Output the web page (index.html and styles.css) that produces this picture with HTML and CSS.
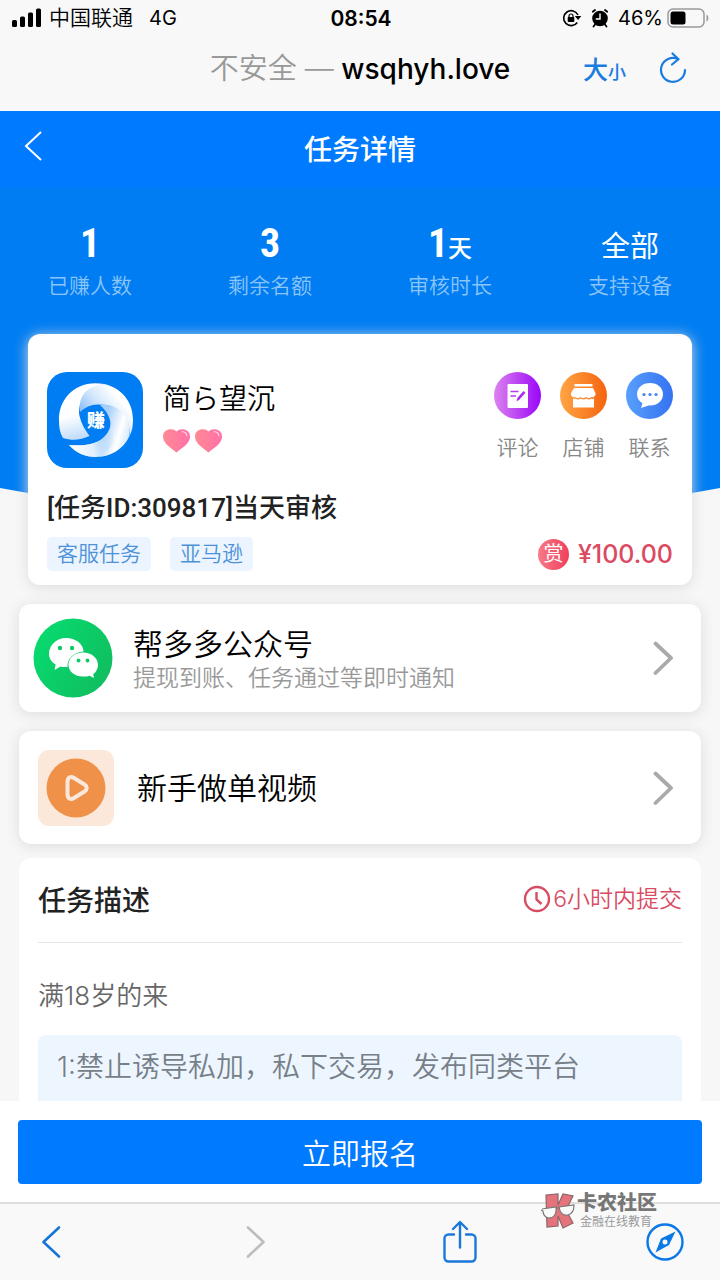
FILE: index.html
```html
<!DOCTYPE html>
<html lang="zh-CN">
<head>
<meta charset="utf-8">
<meta name="viewport" content="width=device-width, initial-scale=1">
<title>任务详情</title>
<link rel="stylesheet" href="styles.css">
</head>
<body>
<div class="screen">
  <div class="statusbar">
    <div class="status-left">
      <svg width="30" height="20" viewBox="0 0 30 20" aria-hidden="true"><rect x="0" y="12" width="5" height="7" rx="1.5"/><rect x="8" y="8.500" width="5" height="10.500" rx="1.500"/><rect x="16" y="4.500" width="5" height="14.500" rx="1.500"/><rect x="24" y="0.500" width="5" height="18.500" rx="1.500"/></svg>
      <span class="carrier">中国联通</span>
      <span>4G</span>
    </div>
    <div class="status-time">08:54</div>
    <div class="status-right">
      <svg width="20" height="20" viewBox="0 0 20 20" aria-hidden="true"><path d="M15.300 14.500A7.500 7.500 0 1 1 16 7" fill="none" stroke="#000" stroke-width="1.600"/><path d="M12.800 8h6.500l-3.200 4z"/><rect x="5.700" y="9" width="6.600" height="5" rx="0.800"/><path d="M7 9.500V8a2 2 0 0 1 4 0v1.500" fill="none" stroke="#000" stroke-width="1.200"/></svg>
      <svg class="alarm" width="18" height="20" viewBox="0 0 18 20" aria-hidden="true"><circle cx="9" cy="10.500" r="7.800"/><path d="M1.800 3.800 4 2M16.200 3.800 14 2M4 16.500l-1.500 2M14 16.500l1.500 2" stroke="#000" stroke-width="1.800" stroke-linecap="round"/><path d="M9 5.500v5.500H4.800" fill="none" stroke="#fff" stroke-width="1.400"/></svg>
      <span>46%</span>
      <svg width="43" height="20" viewBox="0 0 43 20" aria-hidden="true"><rect x="1" y="1" width="36" height="18" rx="5" fill="none" stroke="#999" stroke-width="1.500"/><rect x="3.500" y="3.500" width="15" height="13" rx="2.500"/><path d="M39.500 6.500c2.500 1 2.500 6 0 7z" fill="#999"/></svg>
    </div>
  </div>
  <div class="addressbar">
    <div class="address"><span class="insecure">不安全 —</span> wsqhyh.love</div>
    <div class="address-tools">
      <button class="plain textsize" type="button"><span class="big">大</span><span class="small">小</span></button>
      <button class="plain" type="button" aria-label="刷新"><svg width="28" height="32" viewBox="0 0 28 32" fill="none" stroke="#1a7be0" stroke-width="2.200" stroke-linecap="round" stroke-linejoin="round"><path d="M26 18A12 12 0 1 1 19 7"/><path d="M13.500 1.500 19.500 7.200 13 12.500"/></svg></button>
    </div>
  </div>

  <header class="nav">
    <button class="plain nav-back" type="button" aria-label="返回"><svg width="18" height="32" viewBox="0 0 18 32" fill="none" stroke="#fff" stroke-width="2"><path d="M17 2 2 16l15 14"/></svg></button>
    <h1 class="nav-title">任务详情</h1>
  </header>

  <main class="content">
    <section class="hero">
      <div class="stat"><div class="stat-value">1</div><div class="stat-label">已赚人数</div></div>
      <div class="stat"><div class="stat-value">3</div><div class="stat-label">剩余名额</div></div>
      <div class="stat"><div class="stat-value">1<span class="unit">天</span></div><div class="stat-label">审核时长</div></div>
      <div class="stat"><div class="stat-value"><span class="word">全部</span></div><div class="stat-label">支持设备</div></div>
    </section>

    <section class="card task">
      <div class="task-top">
        <svg class="avatar" width="96" height="96" viewBox="0 0 96 96" aria-hidden="true">
          <defs>
            <linearGradient id="bladeA" x1="0" y1="0" x2="0.200" y2="1"><stop offset="0.600" stop-color="#fff"/><stop offset="1" stop-color="#c3defb"/></linearGradient>
            <linearGradient id="bladeB" gradientUnits="userSpaceOnUse" x1="34" y1="38" x2="62" y2="14"><stop offset="0" stop-color="#8fc1f7"/><stop offset="0.500" stop-color="#d3e7fd"/><stop offset="1" stop-color="#fff"/></linearGradient>
            <linearGradient id="bladeC" gradientUnits="userSpaceOnUse" x1="58" y1="48" x2="86" y2="56"><stop offset="0" stop-color="#a5cef9"/><stop offset="0.600" stop-color="#fff"/><stop offset="1" stop-color="#cfe5fd"/></linearGradient>
            <linearGradient id="bladeD" gradientUnits="userSpaceOnUse" x1="22" y1="76" x2="68" y2="66"><stop offset="0" stop-color="#fff"/><stop offset="0.500" stop-color="#e3f0fe"/><stop offset="1" stop-color="#9ccafa" stop-opacity="0"/></linearGradient>
          </defs>
          <rect width="96" height="96" rx="20" fill="#007df2"/>
          <path d="M57 12C29 7 11 27 12 49c0 7 1 12 4 17 9 3 18 2 26.500-2C38 58 34 51 32.500 44 30 30 40 17 57 12z" fill="url(#bladeA)"/>
          <path d="M57 12c18 4 29 18 29 36 0 6-1 11-3 15 0-17-11-31-30.500-30.500C45 32 38 35 33 40c-2-16 7-26 24-28z" fill="url(#bladeB)"/>
          <path d="M52.500 32.500C73 31 85 47 82.500 64 76 78 63 85 49 85c-11 0-20-4-27-12 13 1 26 0 34-7 10-9 11-20-3.500-33.500z" fill="url(#bladeC)"/>
          <path d="M64 51c0 7-3 12-8 15-8 7-21 8-34 7 7 8 16 12 27 12 10-2 24-14 15-34z" fill="url(#bladeD)"/>
          <text class="avatar-text" x="49" y="55" text-anchor="middle">赚</text>
        </svg>
        <div class="who">
          <div class="name">简ら望沉</div>
          <div class="hearts">
            <svg width="27" height="24" viewBox="0 0 27 24" aria-hidden="true"><defs><linearGradient id="heart"><stop stop-color="#ff8a93"/><stop offset="1" stop-color="#ff70a8"/></linearGradient></defs><path d="M13.500 23.500C8 19 0 14.500 0 7.500 0 0 9.500-1.800 13.500 2.500 17.500-1.800 27 0 27 7.500c0 7-8 11.500-13.500 16z" fill="url(#heart)"/><path d="M19.500 2.700c2.500.200 4 1.700 4.400 4" fill="none" stroke="#ffd0e0" stroke-width="1.300" stroke-linecap="round"/></svg>
            <svg width="27" height="24" viewBox="0 0 27 24" aria-hidden="true"><path d="M13.500 23.500C8 19 0 14.500 0 7.500 0 0 9.500-1.800 13.500 2.500 17.500-1.800 27 0 27 7.500c0 7-8 11.500-13.500 16z" fill="url(#heart)"/><path d="M19.500 2.700c2.500.200 4 1.700 4.400 4" fill="none" stroke="#ffd0e0" stroke-width="1.300" stroke-linecap="round"/></svg>
          </div>
        </div>
        <div class="shortcuts">
          <button class="plain shortcut" type="button">
            <svg width="47" height="47" viewBox="0 0 47 47" aria-hidden="true"><defs><linearGradient id="purple"><stop stop-color="#dc83ee"/><stop offset="1" stop-color="#9a06f8"/></linearGradient></defs><circle cx="23.500" cy="23.500" r="23.500" fill="url(#purple)"/><rect x="13.500" y="12" width="20.500" height="24" rx="1" fill="#fff"/><path d="M16.500 19.500h8M16.500 24h5.500" stroke="#b23bf3" stroke-width="1.500"/><path d="M22.500 29.500l1-3.800 6-6.700 2 1.800-6 6.800z" fill="#a82af4"/></svg>
            <span>评论</span>
          </button>
          <button class="plain shortcut" type="button">
            <svg width="47" height="47" viewBox="0 0 47 47" aria-hidden="true"><defs><linearGradient id="orange"><stop stop-color="#ffa545"/><stop offset="1" stop-color="#f5640f"/></linearGradient></defs><circle cx="23.500" cy="23.500" r="23.500" fill="url(#orange)"/><path d="M14.500 12h18v2.500h-18z" fill="#fff"/><path d="M14 16h19l2.500 5c.500 3-2 5-4 4-1.500 1.500-4 1.500-5.500 0-1.500 1.500-4 1.500-5.500 0-1.500 1.500-4 1.500-5.500 0-2 1-4.500-1-4-4z" fill="#fff"/><path d="M13 26.500c1.500.300 1.500.300 2.300 0 1.700 1.300 3.700 1.300 5.400 0 1.500 1.300 4 1.300 5.600 0 1.500 1.300 4 1.300 5.200 0 1 .500 1.500.500 2.500 0v9H13z" fill="#fff"/></svg>
            <span>店铺</span>
          </button>
          <button class="plain shortcut" type="button">
            <svg width="47" height="47" viewBox="0 0 47 47" aria-hidden="true"><defs><linearGradient id="blue"><stop stop-color="#589ffb"/><stop offset="1" stop-color="#3572f3"/></linearGradient></defs><circle cx="23.500" cy="23.500" r="23.500" fill="url(#blue)"/><path d="M24 11c7.500 0 13 4.800 13 11.200 0 6.500-5.500 11.300-13 11.300h-1.500L15 36l1.500-4.800c-3.400-2-5.500-5.200-5.500-9C11 15.800 16.500 11 24 11z" fill="#fff"/><circle cx="18" cy="22.500" r="1.600" fill="#4284f7"/><circle cx="24" cy="22.500" r="1.600" fill="#4284f7"/><circle cx="30" cy="22.500" r="1.600" fill="#4284f7"/></svg>
            <span>联系</span>
          </button>
        </div>
      </div>
      <h2 class="task-title">[任务ID:309817]当天审核</h2>
      <div class="task-meta">
        <span class="tag">客服任务</span>
        <span class="tag">亚马逊</span>
        <span class="reward"><span class="reward-badge">赏</span>¥100.00</span>
      </div>
    </section>

    <a class="card row row-wechat" href="#wechat">
      <svg width="80" height="80" viewBox="0 0 80 80" aria-hidden="true"><defs><linearGradient id="green" x2="1" y2="0.600"><stop stop-color="#06de70"/><stop offset="1" stop-color="#10bf60"/></linearGradient></defs><circle cx="40" cy="40" r="39.500" fill="url(#green)"/><path d="M33 20c9.500 0 17 5.500 17.600 13.500C41 34 34 40.500 34.500 49c-2.500.300-5 0-7-.600L21.500 52l1.200-5.500C18.500 44 16 40.200 16 36c0-9 7.500-16 17-16z" fill="#fff"/><circle cx="27" cy="30" r="2.200" fill="#0ccb66"/><circle cx="39" cy="30" r="2.200" fill="#0ccb66"/><path d="M50 34.500c8.500 0 15 5.500 15 12.500 0 4-2 7-4.800 9.300L61 60l-4.500-2.300c-2 .600-4 .900-6.500.900-8.200 0-14.500-5.200-14.500-11.800 0-6.900 6.300-12.300 14.500-12.300z" fill="#fff"/><circle cx="45.500" cy="42.500" r="1.900" fill="#0ccb66"/><circle cx="54.500" cy="42.500" r="1.900" fill="#0ccb66"/></svg>
      <span class="row-text"><span class="row-title">帮多多公众号</span><span class="row-sub">提现到账、任务通过等即时通知</span></span>
      <svg width="22" height="36" viewBox="0 0 22 36" fill="none" stroke="#aaa" stroke-width="3.800" stroke-linecap="round" stroke-linejoin="round" aria-hidden="true"><path d="M2.500 3.500 18 18 2.500 33"/></svg>
    </a>

    <a class="card row row-video" href="#video">
      <svg width="76" height="76" viewBox="0 0 76 76" aria-hidden="true"><rect width="76" height="76" rx="11" fill="#fbe8da"/><circle cx="38" cy="38" r="29.500" fill="#ef9148"/><path d="M29.500 32c0-4.500 3-6 6.500-4l10.500 6.500c3 2 3 5 0 7L36 48c-3.500 2-6.500.500-6.500-4z" fill="none" stroke="#fbe8da" stroke-width="4" stroke-linejoin="round"/></svg>
      <span class="row-text"><span class="row-title">新手做单视频</span></span>
      <svg width="22" height="36" viewBox="0 0 22 36" fill="none" stroke="#aaa" stroke-width="3.800" stroke-linecap="round" stroke-linejoin="round" aria-hidden="true"><path d="M2.500 3.500 18 18 2.500 33"/></svg>
    </a>

    <section class="details">
      <div class="details-head">
        <h2 class="details-title">任务描述</h2>
        <div class="deadline"><svg width="28" height="28" viewBox="0 0 28 28" fill="none" stroke="#d84c63" stroke-width="2.400" aria-hidden="true"><circle cx="14" cy="14" r="12"/><path d="M13.500 7v7.500l5 4.500"/></svg><span>6小时内提交</span></div>
      </div>
      <p class="requirement">满18岁的来</p>
      <div class="notice">1:禁止诱导私加，私下交易，发布同类平台</div>
    </section>
  </main>

  <div class="actionbar"><button class="apply" type="button">立即报名</button></div>

  <nav class="toolbar">
    <button class="plain tool" type="button" aria-label="后退"><svg width="20" height="34" viewBox="0 0 20 34" fill="none" stroke="#1576d8" stroke-width="2.600" stroke-linecap="round" stroke-linejoin="round"><path d="M18 2.500 2.500 17 18 31.500"/></svg></button>
    <button class="plain tool" type="button" aria-label="前进"><svg width="20" height="34" viewBox="0 0 20 34" fill="none" stroke="#bdbdbd" stroke-width="2.600" stroke-linecap="round" stroke-linejoin="round"><path d="M2 2.500 17.500 17 2 31.500"/></svg></button>
    <button class="plain tool" type="button" aria-label="分享"><svg width="34" height="44" viewBox="0 0 34 44" fill="none" stroke="#1a78d8" stroke-width="2.400" stroke-linecap="round" stroke-linejoin="round"><path d="M11 14.500H5.500a4 4 0 0 0-4 4v19a4 4 0 0 0 4 4h23a4 4 0 0 0 4-4v-19a4 4 0 0 0-4-4H23M17 27.500V2.500M10 9l7-7 7 7"/></svg></button>
    <button class="plain tool" type="button" aria-label="浏览器"><svg width="38" height="38" viewBox="0 0 38 38"><circle cx="19" cy="19" r="17.500" fill="none" stroke="#0a78e6" stroke-width="2.400"/><path fill-rule="evenodd" d="M29.500 8.500 23 22 9.500 29.500 15 15.500zM19 16.500a2.500 2.500 0 1 0 0 5 2.500 2.500 0 0 0 0-5z" fill="#0a78e6"/></svg></button>
    <div class="watermark">
      <svg width="34" height="36" viewBox="0 0 34 36" aria-hidden="true"><path d="M5 2l12-1v11l5-11 10 2-7 14 7 13-10 5-5-12v10l-11 1z" fill="#e5737c" stroke="#8b6668" stroke-width="1.200"/><path d="M1 16l14-2c1 8-3 11-7 11-4 0-6-4-6-7l-2-1M18 14l15-2c0 6-2 9-6 10-5 1-8-2-9-8zM15 15h3" fill="#fafafa" stroke="#777" stroke-width="1.200"/></svg>
      <div><div class="mark-name">卡农社区</div><div class="mark-sub">金融在线教育</div></div>
    </div>
  </nav>
</div>
</body>
</html>
```
FILE: styles.css
```css
* { box-sizing: border-box; }
body {
  margin: 0;
  background: #f7f7f7;
  color: #000;
  font-family: Inter, "Noto Sans CJK SC", sans-serif;
  font-weight: 400;
}
h1, h2, p { margin: 0; }
svg { display: block; flex: none; }
a { color: inherit; text-decoration: none; }
.plain {
  padding: 0;
  border: 0;
  background: none;
  color: inherit;
  font: inherit;
  cursor: pointer;
}
.screen { display: flex; flex-direction: column; height: 100vh; }

/* Phone status */
.statusbar {
  display: grid;
  grid-template-columns: 1fr auto 1fr;
  align-items: center;
  height: 38px;
  padding: 0 10px 2px 12px;
  background: #f8f8f8;
  font-size: 20px;
}
.status-left { display: flex; align-items: center; gap: 7px; }
.carrier { margin-right: 9px; font-size: 21px; font-weight: 350; line-height: 32px; }
.status-time { font-size: 21px; font-weight: 600; }
.status-right { display: flex; align-items: center; justify-content: flex-end; gap: 4px; }
.alarm { margin: 0 5px; }

/* Browser address */
.addressbar {
  display: grid;
  grid-template-columns: 1fr auto 1fr;
  align-items: center;
  height: 73px;
  padding: 0 33px 14px;
  background: #f8f8f8;
}
.address { grid-column: 2; padding-bottom: 4px; font-size: 28px; font-weight: 500; white-space: nowrap; }
.insecure { color: #999; font-size: 29px; font-weight: 350; }
.address-tools { display: flex; align-items: center; justify-content: flex-end; gap: 33px; }
.textsize { color: #1a7be0; font-weight: 500; }
.big { font-size: 25px; }
.small { font-size: 18px; }

/* Page heading */
.nav {
  display: grid;
  grid-template-columns: 1fr auto 1fr;
  align-items: center;
  height: 77px;
  padding: 0 24px 4px;
  background: #007aff;
  color: #fff;
}
.nav-back { padding-bottom: 4px; }
.nav-title { font-size: 28px; font-weight: 500; }

.content { flex: 1; min-height: 0; overflow: hidden; }
.hero {
  display: grid;
  grid-template-columns: repeat(4, 1fr);
  height: 364px;
  padding-top: 34px;
  background: #007df2;
  clip-path: polygon(0 0, 100% 0, 100% calc(100% - 64px), 50% 100%, 0 calc(100% - 64px));
  color: #fff;
  text-align: center;
}
.stat-value {
  height: 44px;
  font-family: "Roboto Condensed", "Open Sans Condensed", Roboto, "Noto Sans CJK SC", sans-serif;
  font-size: 40px;
  font-weight: 700;
  line-height: 44px;
}
.unit { font-size: 24px; font-weight: 500; }
.word { font-size: 29px; font-weight: 400; }
.stat-label { color: #8cc5f9; font-size: 21px; font-weight: 350; line-height: 40px; }

/* Cards */
.card {
  border-radius: 12px;
  background: #fff;
  box-shadow: 0 2px 14px #dcdcdc;
}
.task {
  position: relative;
  margin: -218px 28px 19px;
  padding: 38px 19px 14px;
}
.task-top { display: flex; }
.who { flex: 1; padding: 6px 0 0 20px; }
.name { font-size: 28px; font-weight: 350; line-height: 42px; }
.hearts { display: flex; gap: 5px; padding-top: 9px; }
.avatar-text { fill: #fff; font-size: 18px; font-weight: 900; }
.shortcuts { display: flex; gap: 19px; }
.shortcut { display: flex; flex-direction: column; align-items: center; gap: 13px; color: #888; font-size: 21px; font-weight: 350; line-height: 32px; }
.task-title { margin-top: 20px; color: #222; font-family: Roboto, "Noto Sans CJK SC", sans-serif; font-size: 26px; font-weight: 500; line-height: 40px; }
.task-meta { display: flex; align-items: center; margin-top: 9px; }
.tag {
  margin-right: 19px;
  padding: 0 10px;
  border-radius: 5px;
  background: #ebf4ff;
  color: #4c92d8;
  font-size: 21px;
  font-weight: 350;
  line-height: 34px;
}
.reward { display: flex; align-items: center; gap: 9px; margin-left: auto; color: #dc4a62; font-size: 25px; font-weight: 500; line-height: 32px; }
.reward-badge {
  width: 31px;
  height: 31px;
  border-radius: 50%;
  background: linear-gradient(90deg, #f87a87, #f0405c);
  color: #fff;
  font-size: 20px;
  font-weight: 400;
  line-height: 31px;
  text-align: center;
}

.row { display: flex; align-items: center; margin: 0 19px 19px; }
.row-wechat { height: 108px; padding: 0 26px 0 14px; gap: 20px; }
.row-video { height: 113px; margin-bottom: 14px; padding: 0 26px 0 19px; gap: 23px; }
.row-text { display: flex; flex: 1; flex-direction: column; }
.row-title { font-size: 30px; font-weight: 350; line-height: 40px; }
.row-sub { color: #999; font-size: 23px; font-weight: 350; line-height: 28px; }

/* Description */
.details { position: relative; margin: 0 19px; padding: 0 19px 20px; border-radius: 12px 12px 0 0; background: #fff; }
.details-head { display: flex; align-items: center; justify-content: space-between; height: 85px; padding-bottom: 2px; border-bottom: 1px solid #e6e6e6; }
.details-title { color: #222; font-size: 28px; font-weight: 500; }
.deadline { display: flex; align-items: center; gap: 2px; color: #d84c63; font-size: 23px; font-weight: 350; line-height: 28px; }
.requirement { padding: 33px 0 19px; color: #666; font-size: 26px; font-weight: 350; line-height: 40px; }
.notice { padding: 12px 19px 100px; border-radius: 8px; background: #edf6ff; color: #777f88; font-size: 28px; font-weight: 350; line-height: 40px; }

.actionbar { padding: 19px 18px 18px; background: #fff; }
.apply {
  display: block;
  width: 100%;
  height: 64px;
  border: 0;
  border-radius: 4px;
  background: #007aff;
  color: #fff;
  font-family: Inter, "Noto Sans CJK SC", sans-serif;
  font-size: 29px;
  font-weight: 350;
}

/* Browser tools */
.toolbar {
  position: relative;
  display: flex;
  align-items: center;
  justify-content: space-between;
  height: 78px;
  padding: 0 36px 0 32px;
  border-top: 2px solid #dedede;
  background: #f9f9f9;
}
.tool { display: flex; justify-content: center; width: 38px; }
.watermark { position: absolute; top: -12px; right: 63px; display: flex; align-items: center; gap: 2px; color: #777; }
.mark-name { font-size: 20px; font-weight: 900; line-height: 23px; }
.mark-sub { padding-left: 3px; color: #999; font-size: 12px; line-height: 14px; }
```
